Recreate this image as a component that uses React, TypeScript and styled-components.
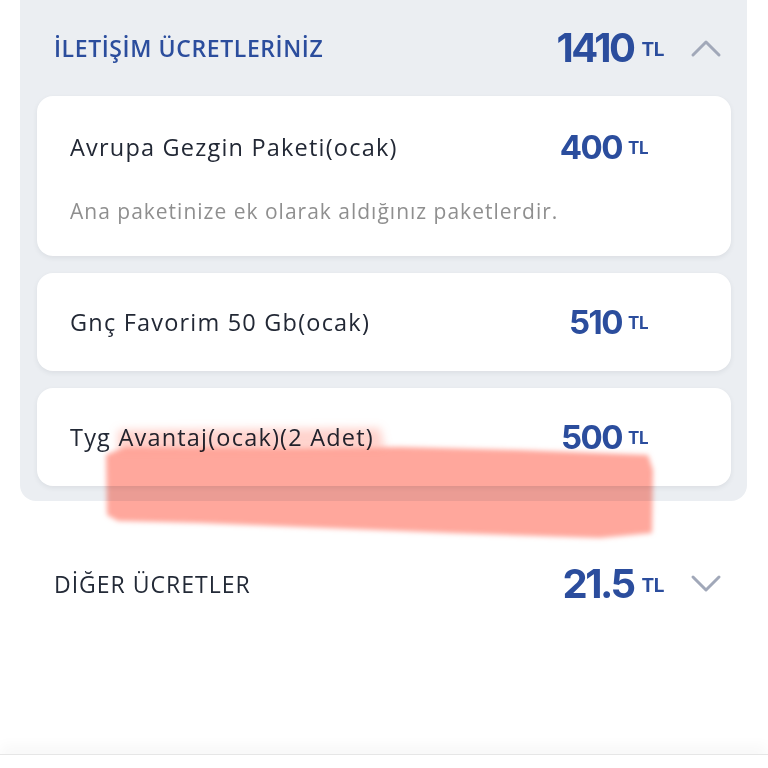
import React from "react";
import styled, { createGlobalStyle } from "styled-components";

const GlobalStyle = createGlobalStyle`
  html, body { margin: 0; padding: 0; background: #ffffff; }
  body { font-family: "Open Sans", "Noto Sans", sans-serif; }
  * { box-sizing: border-box; }
`;

const Page = styled.div`
  position: relative;
  width: 768px;
  height: 768px;
  overflow: hidden;
  display: flex;
  flex-direction: column;
  background: #fff;
`;

const Panel = styled.section`
  margin: 0 21px 0 20px;
  background: #ebeef2;
  border-radius: 0 0 16px 16px;
  padding: 0 16px 15px 17px;
  display: flex;
  flex-direction: column;
`;

const SectionHeader = styled.div<{ $height: number; $padLeft: number; $padRight: number }>`
  height: ${(p) => p.$height}px;
  display: flex;
  align-items: center;
  padding: 0 ${(p) => p.$padRight}px 0 ${(p) => p.$padLeft}px;
`;

const HeaderTitle = styled.div<{ $blue?: boolean }>`
  flex: 1;
  font-family: "Open Sans", sans-serif;
  font-size: 23px;
  font-weight: ${(p) => (p.$blue ? 600 : 500)};
  color: ${(p) => (p.$blue ? "#2b4d9d" : "#232a37")};
  letter-spacing: ${(p) => (p.$blue ? 0.6 : 1)}px;
`;

const Amount = styled.div<{ $gap: number }>`
  display: flex;
  align-items: center;
  gap: ${(p) => p.$gap}px;
  color: #2b4d9d;
  font-family: "Inter", sans-serif;
  font-weight: 700;
`;

const Num = styled.span<{ $size: number }>`
  font-size: ${(p) => p.$size}px;
  line-height: 1;
  letter-spacing: ${(p) => (p.$size > 36 ? -2.5 : -1.5)}px;
`;

const Unit = styled.span<{ $size: number }>`
  font-size: ${(p) => p.$size}px;
  line-height: 1;
  letter-spacing: -0.5px;
  margin-top: 2px;
`;

const ChevronBox = styled.div`
  width: 32px;
  height: 20px;
  margin-left: 26px;
  display: flex;
  align-items: center;
  justify-content: center;
`;

const CardList = styled.div`
  display: flex;
  flex-direction: column;
  gap: 17px;
`;

const Card = styled.div<{ $padTop: number; $padBottom: number }>`
  background: #ffffff;
  border-radius: 16px;
  box-shadow: 0 2px 5px rgba(40, 50, 70, 0.08);
  padding: ${(p) => p.$padTop}px 83px ${(p) => p.$padBottom}px 33px;
  display: flex;
  flex-direction: column;
`;

const CardRow = styled.div`
  height: 30px;
  display: flex;
  align-items: center;
  justify-content: space-between;
`;

const ItemName = styled.div`
  font-family: "Open Sans", sans-serif;
  font-size: 23.5px;
  font-weight: 500;
  letter-spacing: 1.2px;
  color: #222835;
`;

const ItemDesc = styled.div`
  margin-top: 35px;
  line-height: 28px;
  font-family: "Open Sans", sans-serif;
  font-size: 21px;
  font-weight: 400;
  letter-spacing: 1px;
  color: #8f8f8f;
`;

const OtherSection = styled.div`
  padding: 62px 0 0 20px;
  margin-right: 21px;
`;

const BottomBar = styled.div`
  margin-top: auto;
  height: 14px;
  border-top: 1px solid #e6e6e6;
  box-shadow: 0 -8px 14px rgba(0, 0, 0, 0.035);
  background: #fff;
`;

const Smear = styled.svg`
  position: absolute;
  left: 0;
  top: 0;
  pointer-events: none;
  mix-blend-mode: multiply;
`;

const Chevron = ({ up }: { up?: boolean }) => (
  <ChevronBox>
    <svg width="32" height="20" viewBox="0 0 32 20">
      <polyline
        points={up ? "3,17 16,4 29,17" : "3,3 16,16 29,3"}
        fill="none"
        stroke="#a1a8b9"
        strokeWidth="3"
        strokeLinecap="round"
        strokeLinejoin="round"
      />
    </svg>
  </ChevronBox>
);

const Price = ({ value, big }: { value: string; big?: boolean }) => (
  <Amount $gap={big ? 8 : 6}>
    <Num $size={big ? 40 : 33}>{value}</Num>
    <Unit $size={big ? 19 : 17}>TL</Unit>
  </Amount>
);

export default function App() {
  return (
    <>
      <GlobalStyle />
      <Page>
        <Panel>
          <SectionHeader $height={96} $padLeft={17} $padRight={9}>
            <HeaderTitle $blue>İLETİŞİM ÜCRETLERİNİZ</HeaderTitle>
            <Price value="1410" big />
            <Chevron up />
          </SectionHeader>
          <CardList>
            <Card $padTop={36} $padBottom={31}>
              <CardRow>
                <ItemName>Avrupa Gezgin Paketi(ocak)</ItemName>
                <Price value="400" />
              </CardRow>
              <ItemDesc>Ana paketinize ek olarak aldığınız paketlerdir.</ItemDesc>
            </Card>
            <Card $padTop={34} $padBottom={34}>
              <CardRow>
                <ItemName>Gnç Favorim 50 Gb(ocak)</ItemName>
                <Price value="510" />
              </CardRow>
            </Card>
            <Card $padTop={34} $padBottom={34}>
              <CardRow>
                <ItemName>Tyg Avantaj(ocak)(2 Adet)</ItemName>
                <Price value="500" />
              </CardRow>
            </Card>
          </CardList>
        </Panel>
        <OtherSection>
          <SectionHeader $height={42} $padLeft={34} $padRight={25}>
            <HeaderTitle>DİĞER ÜCRETLER</HeaderTitle>
            <Price value="21.5" big />
            <Chevron />
          </SectionHeader>
        </OtherSection>
        <BottomBar />
        <Smear width="768" height="768" viewBox="0 0 768 768">
          <defs>
            <filter id="smearBlur" x="-5%" y="-20%" width="110%" height="140%">
              <feGaussianBlur stdDeviation="2.5" />
            </filter>
            <filter id="smearSoft" x="-5%" y="-40%" width="110%" height="180%">
              <feGaussianBlur stdDeviation="4" />
            </filter>
          </defs>
          <polygon
            filter="url(#smearSoft)"
            fill="#ff9d91"
            fillOpacity="0.45"
            points="118,430 380,428 385,450 118,452"
          />
          <polygon
            filter="url(#smearBlur)"
            fill="#ff9d91"
            fillOpacity="0.9"
            points="106,455 125,447 300,448 400,447 520,450 648,455 653,470 652,533 600,538 450,533 300,527 200,523 118,521 107,515"
          />
        </Smear>
      </Page>
    </>
  );
}
